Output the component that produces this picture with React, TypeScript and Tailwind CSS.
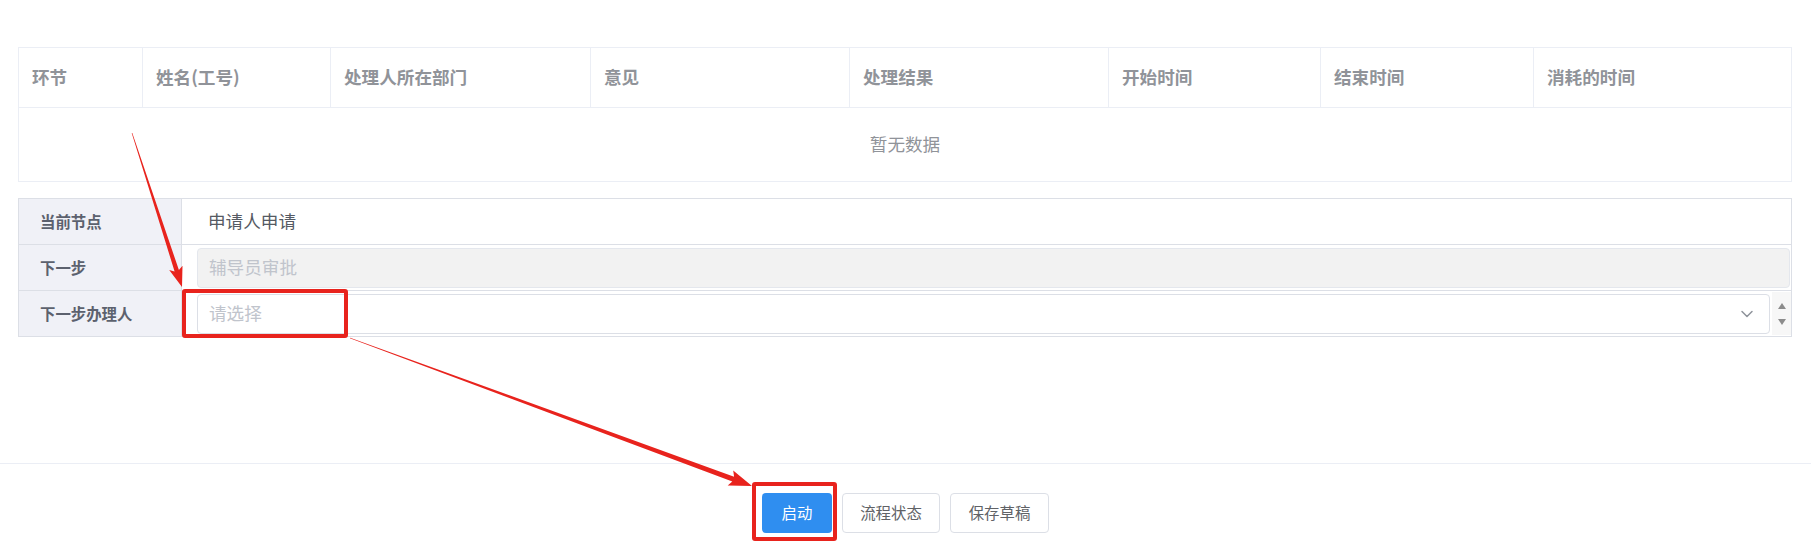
import React from 'react';
import { ChevronDown } from 'lucide-react';

const columns = ['环节', '姓名(工号)', '处理人所在部门', '意见', '处理结果', '开始时间', '结束时间', '消耗的时间'];

type Pt = [number, number];

// tapered annotation arrow: thin at the tail, wide near the head
const arrowPoints = (s: Pt, t: Pt, headLen: number, headHalf: number, tail: number, neck: number) => {
  const dx = t[0] - s[0];
  const dy = t[1] - s[1];
  const len = Math.hypot(dx, dy);
  const ux = dx / len;
  const uy = dy / len;
  const nx = -uy;
  const ny = ux;
  const bx = t[0] - ux * headLen;
  const by = t[1] - uy * headLen;
  const pts: Pt[] = [
    [s[0] + nx * tail, s[1] + ny * tail],
    [bx + nx * neck, by + ny * neck],
    [bx - ux * 3 + nx * headHalf, by - uy * 3 + ny * headHalf],
    t,
    [bx - ux * 3 - nx * headHalf, by - uy * 3 - ny * headHalf],
    [bx - nx * neck, by - ny * neck],
    [s[0] - nx * tail, s[1] - ny * tail],
  ];
  return pts.map((p) => `${p[0].toFixed(1)},${p[1].toFixed(1)}`).join(' ');
};

const FormRow: React.FC<{ label: string; children: React.ReactNode; last?: boolean }> = ({ label, children, last }) => (
  <div className={`flex ${last ? 'h-[45px]' : 'h-[46px] border-b border-[#dcdfe6]'}`}>
    <div className="w-[163px] shrink-0 bg-[#f0f1f7] border-r border-[#dcdfe6] flex items-center pl-[21px] text-[15.4px] font-bold text-[#5c616e]">
      {label}
    </div>
    <div className="flex-1 flex items-center min-w-0">{children}</div>
  </div>
);

export default function App() {
  return (
    <div className="relative w-[1811px] h-[544px] bg-white overflow-hidden font-['Noto_Sans_CJK_SC','Microsoft_YaHei',sans-serif]">
      <div className="h-[463px] pl-[18px] pr-[19px] pt-[47px]">
        {/* approval history */}
        <div className="border border-[#ebeef5]">
          <div className="grid grid-cols-[124px_188px_260px_259px_259px_212px_213px_1fr] h-[59px]">
            {columns.map((c, i) => (
              <div
                key={c}
                className={`flex items-center pl-[13px] text-[17.6px] font-bold text-[#909399] ${i < columns.length - 1 ? 'border-r border-[#ebeef5]' : ''}`}
              >
                {c}
              </div>
            ))}
          </div>
          <div className="h-[74px] border-t border-[#ebeef5] flex items-center justify-center text-[17.6px] text-[#909399]">
            暂无数据
          </div>
        </div>

        {/* current node form */}
        <div className="mt-[16px] border border-[#dcdfe6]">
          <FormRow label="当前节点">
            <span className="pl-[26px] text-[17.6px] text-[#555a63]">申请人申请</span>
          </FormRow>
          <FormRow label="下一步">
            <div className="ml-[15px] mr-[1px] flex-1 h-[40px] rounded-[4px] border border-[#e4e7ed] bg-[#f2f2f2] flex items-center pl-[11px] text-[17.6px] text-[#c0c4cc]">
              辅导员审批
            </div>
          </FormRow>
          <FormRow label="下一步办理人" last>
            <div className="ml-[15px] flex-1 h-[40px] rounded-[4px] border border-[#dcdfe6] bg-white flex items-center justify-between pl-[11px] pr-[12px] text-[17.6px] text-[#c0c4cc]">
              <span>请选择</span>
              <ChevronDown size={20} strokeWidth={1.8} className="text-[#8f939b]" />
            </div>
            <div className="w-[19px] ml-[2px] h-[43px] bg-[#f7f7f7] flex flex-col items-center justify-center gap-[10px]">
              <span className="w-0 h-0 border-l-[4px] border-r-[4px] border-b-[6px] border-l-transparent border-r-transparent border-b-[#8c8c8c]" />
              <span className="w-0 h-0 border-l-[4px] border-r-[4px] border-t-[6px] border-l-transparent border-r-transparent border-t-[#8c8c8c]" />
            </div>
          </FormRow>
        </div>
      </div>

      {/* footer actions */}
      <div className="border-t border-[#ebeef5] pt-[29px] flex justify-center gap-[10px]">
        <button className="w-[70px] h-[40px] rounded-[4px] bg-[#2f8ef0] text-white text-[15.4px]">启动</button>
        <button className="w-[98px] h-[40px] rounded-[4px] border border-[#dcdfe6] bg-white text-[#606266] text-[15.4px]">流程状态</button>
        <button className="w-[99px] h-[40px] rounded-[4px] border border-[#dcdfe6] bg-white text-[#606266] text-[15.4px]">保存草稿</button>
      </div>

      {/* red annotation marks */}
      <div className="absolute left-[182px] top-[289px] w-[166px] h-[49px] border-[4px] border-[#e8231d] rounded-[3px]" />
      <div className="absolute left-[752px] top-[482px] w-[85px] h-[59px] border-[4px] border-[#e8231d] rounded-[3px]" />
      <svg className="absolute inset-0 pointer-events-none" width="1811" height="544">
        <polygon points={arrowPoints([132, 133], [182, 287], 17, 7, 0.3, 2.3)} fill="#e8231d" />
        <polygon points={arrowPoints([350, 338], [752, 486], 20, 8, 0.3, 2.6)} fill="#e8231d" />
      </svg>
    </div>
  );
}
